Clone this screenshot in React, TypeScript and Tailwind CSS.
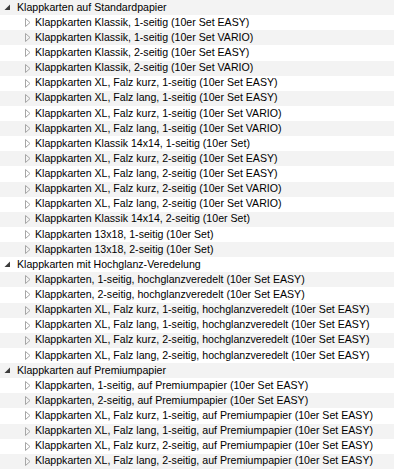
const groups = [
  {
    title: "Klappkarten auf Standardpapier",
    items: [
      "Klappkarten Klassik, 1-seitig (10er Set EASY)",
      "Klappkarten Klassik, 1-seitig (10er Set VARIO)",
      "Klappkarten Klassik, 2-seitig (10er Set EASY)",
      "Klappkarten Klassik, 2-seitig (10er Set VARIO)",
      "Klappkarten XL, Falz kurz, 1-seitig (10er Set EASY)",
      "Klappkarten XL, Falz lang, 1-seitig (10er Set EASY)",
      "Klappkarten XL, Falz kurz, 1-seitig (10er Set VARIO)",
      "Klappkarten XL, Falz lang, 1-seitig (10er Set VARIO)",
      "Klappkarten Klassik 14x14, 1-seitig (10er Set)",
      "Klappkarten XL, Falz kurz, 2-seitig (10er Set EASY)",
      "Klappkarten XL, Falz lang, 2-seitig (10er Set EASY)",
      "Klappkarten XL, Falz kurz, 2-seitig (10er Set VARIO)",
      "Klappkarten XL, Falz lang, 2-seitig (10er Set VARIO)",
      "Klappkarten Klassik 14x14, 2-seitig (10er Set)",
      "Klappkarten 13x18, 1-seitig (10er Set)",
      "Klappkarten 13x18, 2-seitig (10er Set)",
    ],
  },
  {
    title: "Klappkarten mit Hochglanz-Veredelung",
    items: [
      "Klappkarten, 1-seitig, hochglanzveredelt (10er Set EASY)",
      "Klappkarten, 2-seitig, hochglanzveredelt (10er Set EASY)",
      "Klappkarten XL, Falz kurz, 1-seitig, hochglanzveredelt (10er Set EASY)",
      "Klappkarten XL, Falz lang, 1-seitig, hochglanzveredelt (10er Set EASY)",
      "Klappkarten XL, Falz kurz, 2-seitig, hochglanzveredelt (10er Set EASY)",
      "Klappkarten XL, Falz lang, 2-seitig, hochglanzveredelt (10er Set EASY)",
    ],
  },
  {
    title: "Klappkarten auf Premiumpapier",
    items: [
      "Klappkarten, 1-seitig, auf Premiumpapier (10er Set EASY)",
      "Klappkarten, 2-seitig, auf Premiumpapier (10er Set EASY)",
      "Klappkarten XL, Falz kurz, 1-seitig, auf Premiumpapier (10er Set EASY)",
      "Klappkarten XL, Falz lang, 1-seitig, auf Premiumpapier (10er Set EASY)",
      "Klappkarten XL, Falz kurz, 2-seitig, auf Premiumpapier (10er Set EASY)",
      "Klappkarten XL, Falz lang, 2-seitig, auf Premiumpapier (10er Set EASY)",
    ],
  },
];

type Row = { text: string; group: boolean };

const rows: Row[] = groups.flatMap((g) => [
  { text: g.title, group: true },
  ...g.items.map((text) => ({ text, group: false })),
]);

// filled "expanded" arrow, Windows tree style
function Expanded() {
  return (
    <svg width="7" height="7" viewBox="0 0 7 7" aria-hidden className="shrink-0">
      <polygon points="6,0.5 6,6 0.5,6" fill="#3c3c3c" />
    </svg>
  );
}

// hollow "collapsed" arrow
function Collapsed() {
  return (
    <svg width="6" height="9" viewBox="0 0 6 9" aria-hidden className="shrink-0">
      <polygon points="0.5,0.5 5,4.5 0.5,8.5" fill="none" stroke="#a6a6a6" strokeWidth="1" />
    </svg>
  );
}

export default function App() {
  return (
    <div className="w-[394px] h-[469px] overflow-hidden bg-white font-['Liberation_Sans',sans-serif] text-[10.6px] text-black">
      {rows.map((row, i) => (
        <div
          key={i}
          className={`flex items-center h-[15.13px] whitespace-nowrap ${i % 2 === 0 ? "bg-[#f3f3f3]" : "bg-white"}`}
        >
          {row.group ? (
            <div className="flex items-center">
              <span className="w-[17px] pl-[4px] flex">
                <Expanded />
              </span>
              <span>{row.text}</span>
            </div>
          ) : (
            <div className="flex items-center">
              <span className="w-[35px] pl-[25px] flex">
                <Collapsed />
              </span>
              <span>{row.text}</span>
            </div>
          )}
        </div>
      ))}
    </div>
  );
}
